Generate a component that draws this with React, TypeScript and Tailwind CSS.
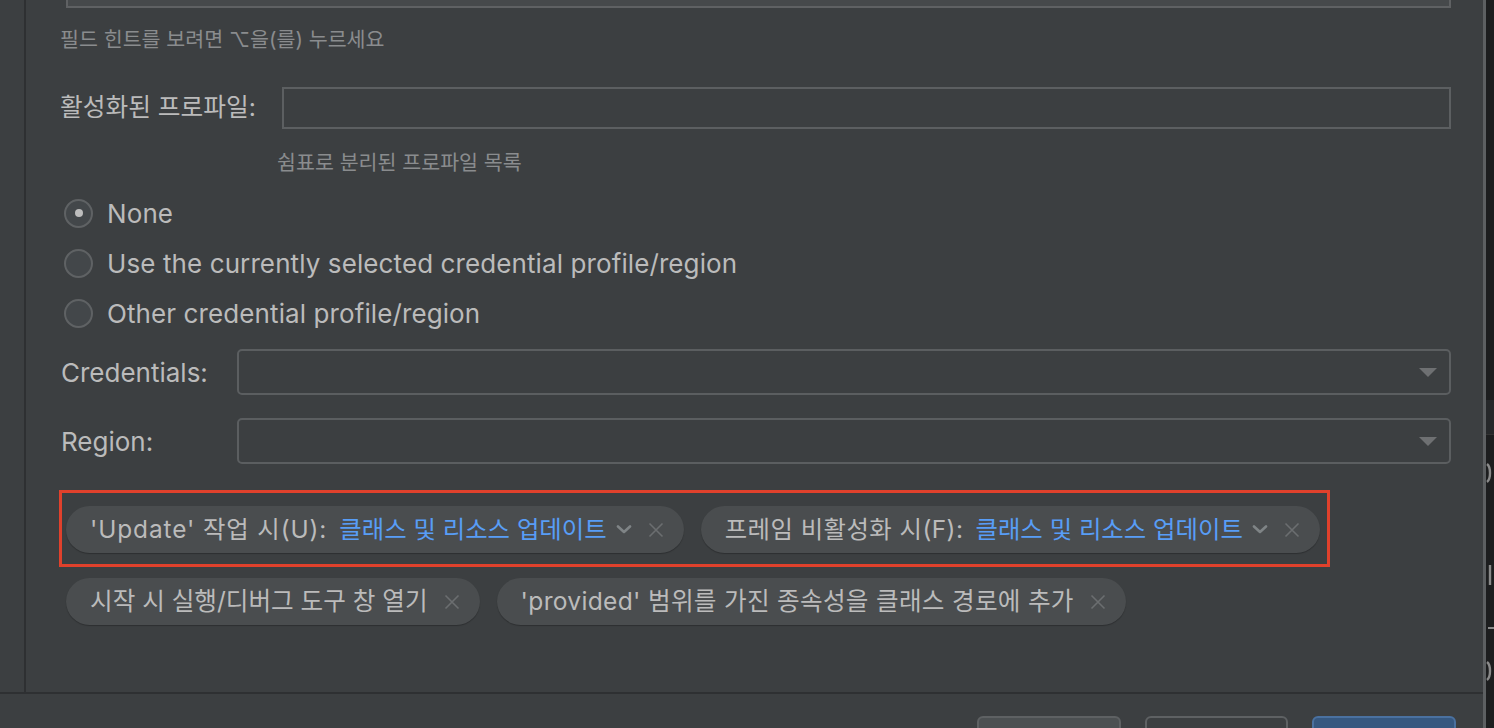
import React from "react";

const FONT = "font-['Inter','Noto_Sans_CJK_KR',sans-serif]";

function Chevron() {
  return (
    <svg width="16" height="9" viewBox="0 0 16 9" className="shrink-0">
      <path d="M2 1.5 L8 7 L14 1.5" fill="none" stroke="#7f8486" strokeWidth="2.6" strokeLinecap="round" strokeLinejoin="round" />
    </svg>
  );
}

function Close() {
  return (
    <svg width="16" height="16" viewBox="0 0 16 16" className="shrink-0">
      <path d="M1.5 1.5 L14.5 14.5 M14.5 1.5 L1.5 14.5" fill="none" stroke="#6b6e70" strokeWidth="1.6" />
    </svg>
  );
}

function Chip({ label, value, wide }: { label: string; value?: string; wide?: boolean }) {
  return (
    <div className="flex h-[47px] items-center rounded-full bg-[#4a4d4f] pl-[24px] pr-[20px] shadow-[0_1px_1px_rgba(0,0,0,0.25)]">
      {value ? (
        <>
          <span
            className={`text-[24.4px] ${wide ? "tracking-[0.9px]" : "tracking-[0.45px]"} text-[#bbbbbb] whitespace-nowrap`}
          >
            {label}
          </span>
          <span className="ml-[12px] text-[24.4px] text-[#589df6] whitespace-nowrap">{value}</span>
          <span className="ml-[9px]">
            <Chevron />
          </span>
        </>
      ) : (
        <span className={`text-[24.6px] ${wide ? "tracking-[0.3px]" : ""} text-[#bbbbbb] whitespace-nowrap`}>{label}</span>
      )}
      <span className="ml-[16px]">
        <Close />
      </span>
    </div>
  );
}

function Radio({ checked, label }: { checked?: boolean; label: string }) {
  return (
    <div className="flex h-[50px] items-center">
      <div className="ml-[4px] flex h-[29px] w-[29px] items-center justify-center rounded-full border-2 border-[#5f6264] bg-[#43474a]">
        {checked && <div className="h-[8px] w-[8px] rounded-full bg-[#bdbdbd]" />}
      </div>
      <span className="ml-[14px] text-[26px] tracking-[0.1px] text-[#bbbbbb] whitespace-nowrap">{label}</span>
    </div>
  );
}

function Combo() {
  return (
    <div className="flex h-[46px] flex-1 items-center justify-end rounded-[5px] border-2 border-[#5b5e60] pr-[12px]">
      <svg width="18" height="9" viewBox="0 0 18 9">
        <path d="M0 0 L18 0 L9 9 Z" fill="#6e7072" />
      </svg>
    </div>
  );
}

function Fragment({ d }: { d: string }) {
  return (
    <svg width="8" height="24" viewBox="0 0 8 24" className="shrink-0">
      <path d={d} fill="none" stroke="#8a8a8a" strokeWidth="2.4" />
    </svg>
  );
}

export default function App() {
  return (
    <div className={`${FONT} flex h-[728px] w-[1494px] overflow-hidden bg-[#1e1f20]`}>
      {/* main dialog panel */}
      <div className="flex w-[1483px] shrink-0 flex-col bg-[#3c3f41]">
        <div className="flex h-[692px] shrink-0">
          <div className="w-[24px] shrink-0" />
          <div className="w-[2px] shrink-0 bg-[#2e3032]" />
          <div className="flex flex-1 flex-col pl-[34px] pr-[32px]">
            {/* bottom of previous input */}
            <div className="ml-[6px] h-[8px] border-x-2 border-b-2 border-[#5f6163] bg-[#46494b]" />
            <div className="mt-[20px] h-[24px] text-[20.6px] leading-[24px] text-[#8a8c8e] whitespace-nowrap">
              필드 힌트를 보려면 ⌥을(를) 누르세요
            </div>
            {/* active profiles */}
            <div className="mt-[35px] flex h-[42px] items-center">
              <span className="w-[222px] shrink-0 text-[24.7px] text-[#bbbbbb] whitespace-nowrap">활성화된 프로파일:</span>
              <div className="h-[42px] flex-1 border-2 border-[#5c5f61]" />
            </div>
            <div className="mt-[22px] h-[24px] pl-[217px] text-[20.6px] leading-[24px] text-[#8a8c8e] whitespace-nowrap">
              쉼표로 분리된 프로파일 목록
            </div>
            {/* radios */}
            <div className="mt-[13px] flex flex-col">
              <Radio checked label="None" />
              <Radio label="Use the currently selected credential profile/region" />
              <Radio label="Other credential profile/region" />
            </div>
            {/* combos */}
            <div className="mt-[11px] flex items-center">
              <span className="w-[177px] shrink-0 pl-[1px] text-[26px] text-[#bbbbbb]">Credentials:</span>
              <Combo />
            </div>
            <div className="mt-[23px] flex items-center">
              <span className="w-[177px] shrink-0 pl-[1px] text-[26px] text-[#bbbbbb]">Region:</span>
              <Combo />
            </div>
            {/* chips */}
            <div className="mt-[26px] flex">
              <div className="-ml-[1px] flex gap-[17px] border-[3px] border-[#e0412c] pb-[11px] pl-[4px] pr-[7px] pt-[13px]">
                <Chip wide label="'Update' 작업 시(U):" value="클래스 및 리소스 업데이트" />
                <Chip label="프레임 비활성화 시(F):" value="클래스 및 리소스 업데이트" />
              </div>
            </div>
            <div className="mt-[11px] flex gap-[17px] pl-[6px]">
              <Chip label="시작 시 실행/디버그 도구 창 열기" />
              <Chip wide label="'provided' 범위를 가진 종속성을 클래스 경로에 추가" />
            </div>
          </div>
        </div>
        <div className="h-[2px] shrink-0 bg-[#2e3032]" />
        {/* bottom button bar */}
        <div className="flex flex-1 items-start justify-end gap-[24px] pr-[27px] pt-[22px]">
          <div className="h-[40px] w-[144px] rounded-[6px] border-2 border-[#5e6163] bg-[#4c5052]" />
          <div className="h-[40px] w-[143px] rounded-[6px] border-2 border-[#5e6163] bg-[#3c3f41]" />
          <div className="h-[40px] w-[144px] rounded-[6px] border-2 border-[#4a71a0] bg-[#365880]" />
        </div>
      </div>
      {/* panel border */}
      <div className="w-[3px] shrink-0 bg-[#5d6062]" />
      {/* background window fragments */}
      <div className="flex w-[8px] shrink-0 flex-col overflow-hidden bg-[#1d1e1f]">
        <div className="mt-[400px] h-[35px] border-b border-[#333] bg-[#26282a]" />
        <div className="mt-[26px]">
          <Fragment d="M1 3 C5 6 5 18 1 21" />
        </div>
        <div className="mt-[78px]">
          <Fragment d="M4 2 L4 22" />
        </div>
        <div className="mt-[40px] ml-[2px] h-[2px] w-[6px] bg-[#8a8a8a]" />
        <div className="mt-[30px]">
          <Fragment d="M1 3 C5 6 5 18 1 21" />
        </div>
      </div>
    </div>
  );
}
